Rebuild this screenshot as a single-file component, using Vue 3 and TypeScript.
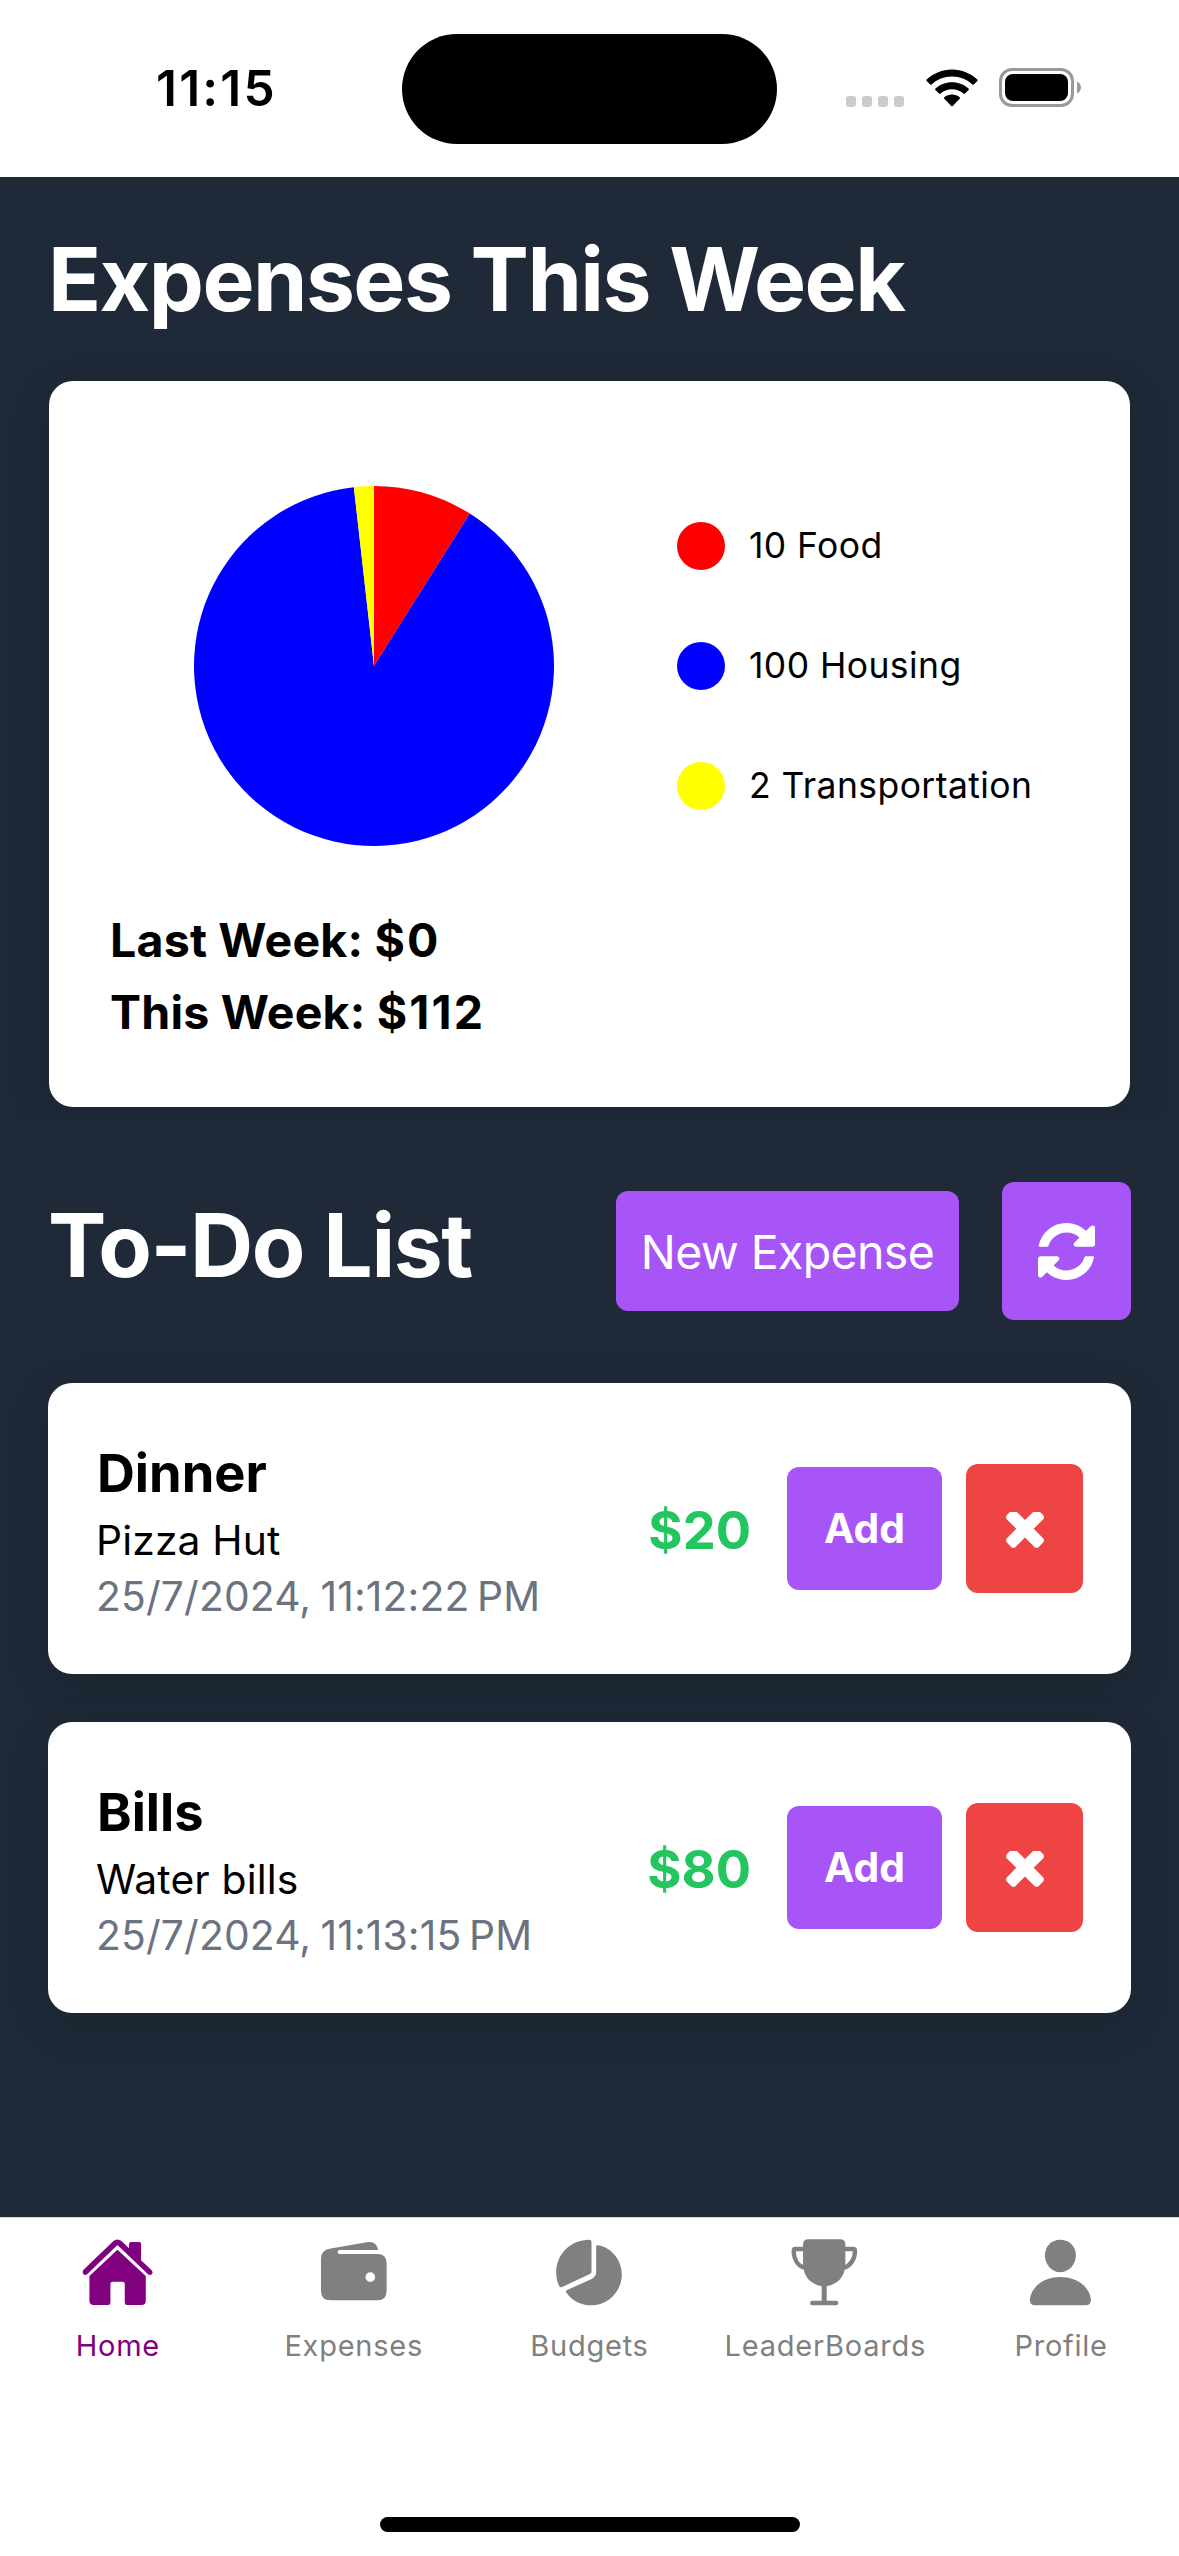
<script setup lang="ts">
interface Slice {
  label: string
  value: number
  color: string
}

interface Todo {
  title: string
  note: string
  date: string
  amount: number
}

const slices: Slice[] = [
  { label: 'Food', value: 10, color: '#ff0000' },
  { label: 'Housing', value: 100, color: '#0000ff' },
  { label: 'Transportation', value: 2, color: '#ffff00' },
]

const total = slices.reduce((sum, s) => sum + s.value, 0)

function point(turn: number): string {
  const a = turn * Math.PI * 2
  return `${(180 + 180 * Math.sin(a)).toFixed(2)} ${(180 - 180 * Math.cos(a)).toFixed(2)}`
}

let run = 0
const wedges = slices.map((s) => {
  const from = run / total
  run += s.value
  const to = run / total
  const large = to - from > 0.5 ? 1 : 0
  return { color: s.color, d: `M180 180L${point(from)}A180 180 0 ${large} 1 ${point(to)}Z` }
})

const todos: Todo[] = [
  { title: 'Dinner', note: 'Pizza Hut', date: '25/7/2024, 11:12:22\u202fPM', amount: 20 },
  { title: 'Bills', note: 'Water bills', date: '25/7/2024, 11:13:15\u202fPM', amount: 80 },
]
</script>

<template>
  <div class="screen">
    <header class="status">
      <span class="time">11:15</span>
      <div class="island"></div>
      <div class="signals">
        <div class="dots"><i v-for="n in 4" :key="n"></i></div>
        <svg class="wifi" width="52" height="38" viewBox="0 0 52 38">
          <path d="M26 0.5C35.8 0.5 44.7 4.300 51.300 10.600Q52 11.300 51.300 12L47.800 15.500Q47.100 16.200 46.400 15.500C41 10.500 33.900 7.600 26 7.600S11 10.500 5.600 15.500Q4.900 16.200 4.200 15.500L0.700 12Q0 11.300 0.700 10.600C7.300 4.300 16.200 0.500 26 0.500Z" />
          <path d="M26 13.200C32.400 13.200 38.200 15.600 42.600 19.600Q43.300 20.300 42.600 21L39 24.600Q38.300 25.300 37.600 24.600C34.500 21.900 30.400 20.200 26 20.200S17.500 21.900 14.400 24.600Q13.700 25.300 13 24.600L9.400 21Q8.700 20.300 9.400 19.600C13.800 15.600 19.600 13.200 26 13.200Z" />
          <path d="M26 25.600C28.900 25.600 31.600 26.600 33.700 28.300Q34.400 29 33.700 29.700L26.700 36.900Q26 37.600 25.300 36.900L18.300 29.700Q17.600 29 18.300 28.300C20.400 26.600 23.100 25.600 26 25.600Z" />
        </svg>
        <svg class="battery" width="82" height="39" viewBox="0 0 82 39">
          <rect x="1.500" y="1.500" width="72" height="36" rx="11.500" fill="none" stroke="#999" stroke-width="3" />
          <rect x="6" y="6" width="63" height="27" rx="8" />
          <path d="M78 13.500C80.600 14.500 82 17 82 19.500S80.600 24.500 78 25.500Z" fill="#999" />
        </svg>
      </div>
    </header>

    <main class="content">
      <h1 class="heading expenses">Expenses This Week</h1>

      <section class="card summary">
        <div class="chart">
          <svg class="pie" width="360" height="360" viewBox="0 0 360 360">
            <path v-for="w in wedges" :key="w.color" :d="w.d" :fill="w.color" />
          </svg>
          <ul class="legend">
            <li v-for="s in slices" :key="s.label">
              <i :style="{ background: s.color }"></i><span>{{ s.value }} {{ s.label }}</span>
            </li>
          </ul>
        </div>
        <p class="week">Last Week: <span>$0</span></p>
        <p class="week">This Week: <span>$112</span></p>
      </section>

      <div class="todo-head">
        <h2 class="heading todo-title">To-Do List</h2>
        <button class="btn new">New Expense</button>
        <button class="btn refresh">
          <svg width="57" height="57" viewBox="128 128 1536 1536">
            <path d="M1639 1056q0 5-1 7-64 268-268 434.500t-478 166.500q-146 0-282.500-55t-243.500-157l-129 129q-19 19-45 19t-45-19-19-45v-448q0-26 19-45t45-19h448q26 0 45 19t19 45-19 45l-137 137q71 66 161 102t187 36q134 0 250-65t186-179q11-17 53-117 8-23 30-23h192q13 0 22.500 9.500t9.500 22.500zm25-800v448q0 26-19 45t-45 19h-448q-26 0-45-19t-19-45 19-45l138-138q-148-137-349-137-134 0-250 65t-186 179q-11 17-53 117-8 23-30 23h-199q-13 0-22.500-9.500t-9.500-22.500v-7q65-268 270-434.500t480-166.500q146 0 284 55.500t245 156.500l130-129q19-19 45-19t45 19 19 45z" />
          </svg>
        </button>
      </div>

      <article v-for="t in todos" :key="t.title" class="card item">
        <div class="info">
          <h3>{{ t.title }}</h3>
          <p class="note">{{ t.note }}</p>
          <p class="date">{{ t.date }}</p>
        </div>
        <span class="amount">${{ t.amount }}</span>
        <button class="btn add">Add</button>
        <button class="btn remove">
          <svg width="38" height="38" viewBox="302 434 1188 1188">
            <path d="M1490 1322q0 40-28 68l-136 136q-28 28-68 28t-68-28l-294-294-294 294q-28 28-68 28t-68-28l-136-136q-28-28-28-68t28-68l294-294-294-294q-28-28-28-68t28-68l136-136q28-28 68-28t68 28l294 294 294-294q28-28 68-28t68 28l136 136q28 28 28 68t-28 68l-294 294 294 294q28 28 28 68z" />
          </svg>
        </button>
      </article>
    </main>

    <nav class="tabs">
      <a class="tab active">
        <svg width="78" height="74" viewBox="236.700 105 234 222">
          <path d="M352 149L437 228V302Q437 315 424 315H381Q374 315 374 308V252Q374 245 367 245H338Q331 245 331 252V308Q331 315 324 315H281Q268 315 268 302V228Z" />
          <path d="M340 123Q352 114 364 123L387 145V132Q387 126 393 126H417Q423 126 423 132V181L456 212Q460 218 455 223Q449 227 443 222L352 135L262 222Q256 227 250 223Q245 218 249 211Z" />
        </svg>
        <span>Home</span>
      </a>
      <a class="tab">
        <svg width="78" height="74" viewBox="944.100 105 234 222">
          <path fill-rule="evenodd" d="M962 176Q962 151 987 146L1100 127Q1128 122 1134 150H1018Q1012 150 1012 156T1018 162H1131Q1159 162 1159 190V272Q1159 301 1131 301H990Q962 301 962 272ZM1110 217A14.500 14.500 0 1 0 1110 246A14.500 14.500 0 1 0 1110 217Z" />
        </svg>
        <span>Expenses</span>
      </a>
      <a class="tab">
        <svg width="78" height="74" viewBox="331.500 105 234 222">
          <path d="M449 119Q456 119 456 126V215Q456 220 451 222L368 261Q362 263 359 258Q350 240 350 217C350 161 395 119 449 119Z" />
          <path d="M470 139Q470 134 476 136C516 143 547 180 547 223C547 275 505 316 455 316C425 316 399 303 381 278Q377 272 383 270L458 236Q470 229 470 217Z" />
        </svg>
        <span>Budgets</span>
      </a>
      <a class="tab">
        <svg width="78" height="74" viewBox="1038.900 105 234 222">
          <path d="M1104 118H1203Q1217 119 1217 134V193C1217 228 1195 253 1161 259V302H1189Q1196 302 1196 309T1189 316H1118Q1111 316 1111 309T1118 302H1146V259C1112 253 1090 228 1090 193V134Q1090 119 1104 118Z" />
          <path class="line" d="M1092 147H1067Q1062 147 1062 152C1062 177 1074 197 1094 203M1215 147H1240Q1246 147 1246 152C1246 177 1233 197 1213 203" />
        </svg>
        <span>LeaderBoards</span>
      </a>
      <a class="tab">
        <svg width="78" height="74" viewBox="366.300 105 234 222">
          <path d="M481 119C508 119 528 139 528 166C528 193 507 217 481 217S435 193 435 166C435 139 455 119 481 119Z" />
          <path d="M481 231C531 231 568 259 573 298Q574 315 557 316H406Q389 315 390 298C395 259 432 231 481 231Z" />
        </svg>
        <span>Profile</span>
      </a>
    </nav>
    <div class="home-bar"></div>
  </div>
</template>

<style>
html,
body {
  margin: 0;
  background: #fff;
}
</style>

<style scoped>
.screen {
  display: flex;
  flex-direction: column;
  width: 1179px;
  height: 2556px;
  overflow: hidden;
  background: #fff;
  color: #000;
  font-family: Inter, 'Liberation Sans', sans-serif;
}

h1,
h2,
h3,
p,
ul {
  margin: 0;
  padding: 0;
}

.status {
  display: grid;
  grid-template-columns: 402px 375px 402px;
  height: 177px;
}

.time {
  margin: 58px 0 0 156px;
  font-size: 49.5px;
  font-weight: 600;
  line-height: 60px;
  letter-spacing: 2.2px;
}

.island {
  height: 110px;
  margin-top: 34px;
  border-radius: 55px;
  background: #000;
}

.signals {
  display: flex;
  align-items: flex-start;
  padding: 68px 0 0 69px;
}

.dots {
  display: flex;
  gap: 6px;
  margin-top: 28px;
}

.dots i {
  width: 10px;
  height: 11px;
  border-radius: 3px;
  background: #ccc;
}

.wifi {
  margin: 1px 0 0 22px;
}

.battery {
  margin-left: 21px;
}

.content {
  flex: none;
  box-sizing: border-box;
  height: 2040px;
  padding: 48px 48px 0;
  background: #1f2937;
}

.heading {
  color: #fff;
  font-size: 87.5px;
  font-weight: 700;
  line-height: 108px;
  letter-spacing: -1.55px;
  white-space: nowrap;
}

.card {
  border-radius: 24px;
  background: #fff;
  box-shadow: 0 12px 48px rgba(0, 20, 10, 0.12);
}

.summary {
  box-sizing: border-box;
  height: 726px;
  margin: 48px 1px 0;
  padding: 60px 61px 0;
  clip-path: inset(-60px -60px -12px -60px);
}

.chart {
  display: flex;
  align-items: center;
  gap: 123px;
  height: 450px;
  margin-bottom: 13px;
  padding-left: 84px;
}

.legend {
  display: flex;
  flex-direction: column;
  gap: 72px;
  list-style: none;
}

.legend li {
  display: flex;
  align-items: center;
  gap: 24px;
  height: 48px;
  font-size: 35.5px;
  letter-spacing: 0.42px;
  white-space: nowrap;
}

.legend span {
  line-height: 44px;
}

.legend i {
  width: 48px;
  height: 48px;
  border-radius: 50%;
}

.week {
  font-size: 46.5px;
  font-weight: 700;
  line-height: 72px;
  letter-spacing: 0.2px;
}

.week span {
  letter-spacing: 2.2px;
}

.todo-head {
  display: flex;
  align-items: center;
  height: 138px;
  margin: 75px 0 63px;
}

.todo-title {
  margin-right: auto;
  padding-bottom: 12px;
  letter-spacing: -1.4px;
}

.btn {
  display: flex;
  align-items: center;
  justify-content: center;
  padding: 0;
  border: 0;
  border-radius: 12px;
  background: #a855f7;
  color: #fff;
  font-family: inherit;
}

.btn svg {
  fill: #fff;
}

.new {
  width: 343px;
  height: 120px;
  margin-right: 43px;
  padding-top: 2px;
  font-size: 46.5px;
  letter-spacing: -0.65px;
}

.refresh {
  width: 129px;
  height: 138px;
}

.item {
  display: flex;
  align-items: center;
  box-sizing: border-box;
  height: 291px;
  margin-bottom: 48px;
  padding: 48px;
}

.info {
  flex: 1;
  white-space: nowrap;
}

.info h3 {
  padding-left: 1px;
  font-size: 52.4px;
  font-weight: 700;
  line-height: 84px;
}

.note,
.date {
  font-size: 40.8px;
  line-height: 50px;
  letter-spacing: 0.15px;
}

.note {
  padding-bottom: 2px;
}

.date {
  color: #6b7280;
  line-height: 59px;
  word-spacing: -2.5px;
}

.amount {
  margin-right: 36px;
  padding-top: 3px;
  color: #22c55e;
  font-size: 52.4px;
  font-weight: 700;
}

.add {
  width: 155px;
  height: 123px;
  margin-right: 24px;
  padding-bottom: 2px;
  font-size: 40.8px;
  font-weight: 700;
}

.remove {
  width: 117px;
  height: 129px;
  background: #ef4444;
}

.remove svg {
  margin-top: 5px;
}

.tabs {
  display: grid;
  grid-template-columns: repeat(5, 1fr);
  box-sizing: border-box;
  height: 300px;
  padding-top: 17px;
  border-top: 1px solid #d8d8d8;
}

.tab {
  display: flex;
  flex-direction: column;
  align-items: center;
  color: #808080;
  fill: currentColor;
}

.tab.active {
  color: #800080;
}

.tab span {
  margin-top: 19px;
  font-size: 29px;
  line-height: 36px;
  letter-spacing: 0.75px;
}

.line {
  fill: none;
  stroke: currentColor;
  stroke-width: 13px;
}

.home-bar {
  width: 420px;
  height: 15px;
  margin: 0 auto;
  border-radius: 8px;
  background: #000;
}
</style>
